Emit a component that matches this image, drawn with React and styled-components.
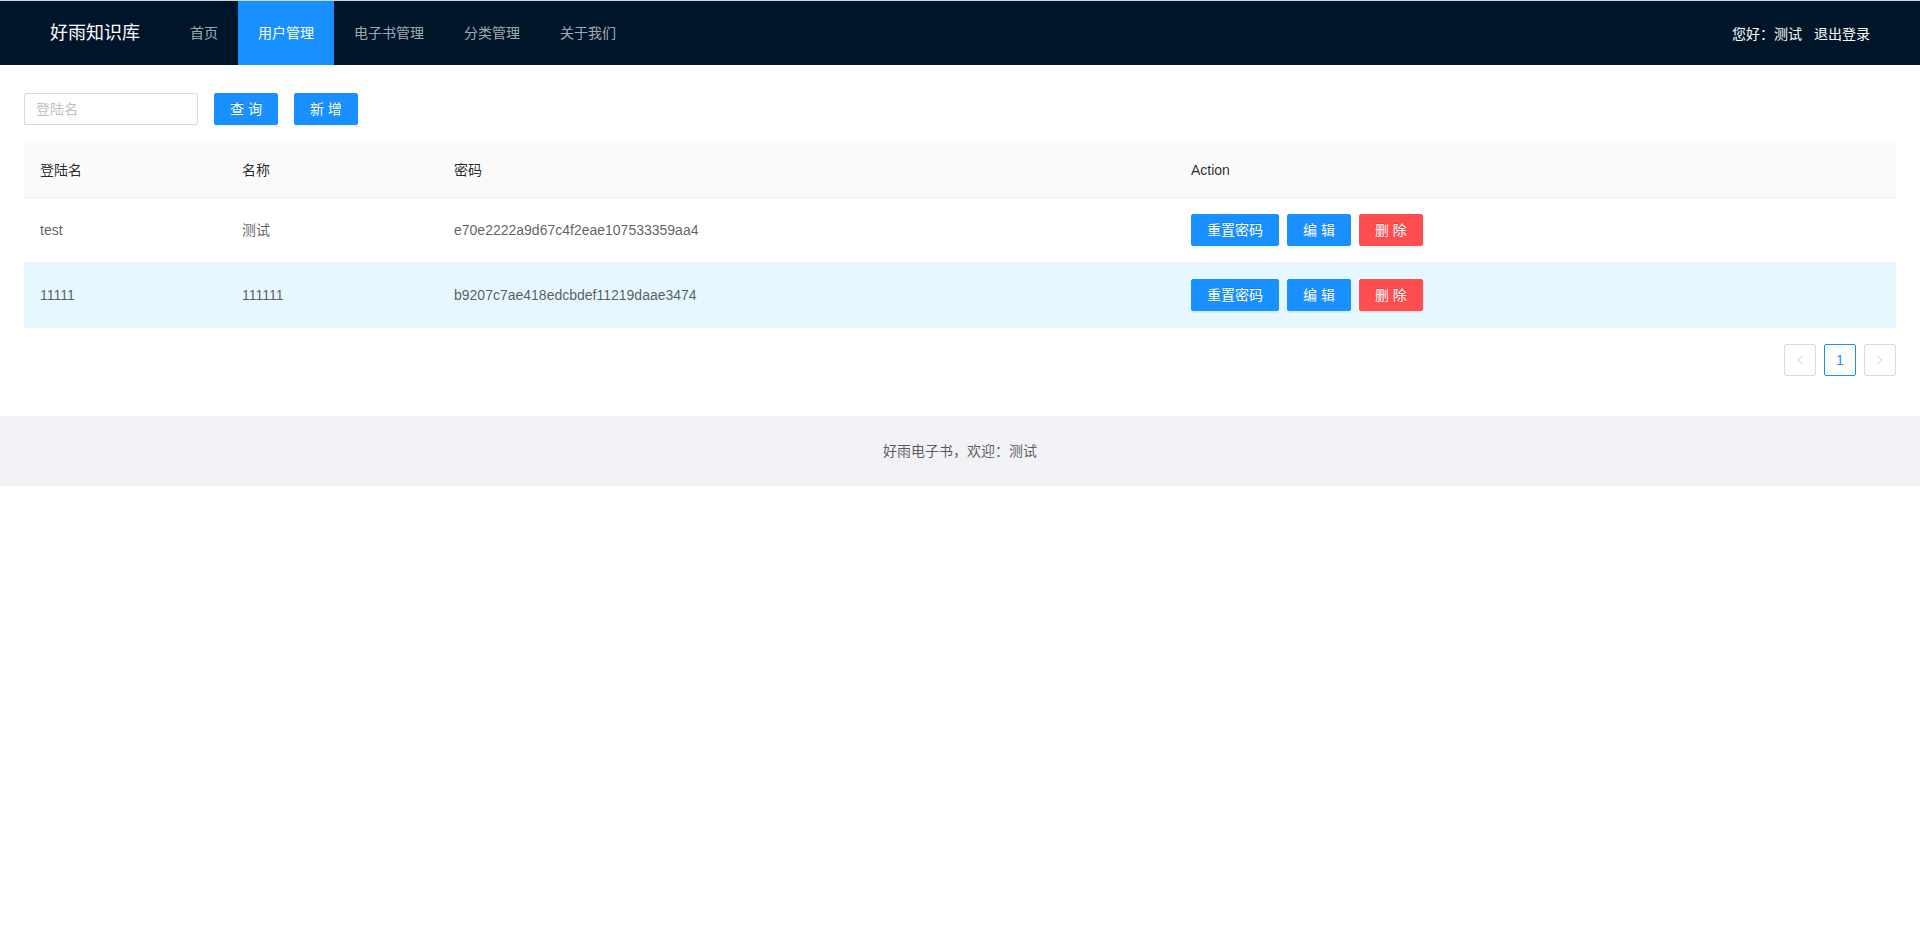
import styled, { createGlobalStyle } from 'styled-components';
import { ChevronLeft, ChevronRight } from 'lucide-react';

const users = [
  { login: 'test', name: '测试', password: 'e70e2222a9d67c4f2eae107533359aa4' },
  { login: '11111', name: '111111', password: 'b9207c7ae418edcbdef11219daae3474', hover: true },
];

const menus = ['首页', '用户管理', '电子书管理', '分类管理', '关于我们'];

const App = () => {
  return (
    <Page>
      <GlobalStyle />
      <Header>
        <Logo>好雨知识库</Logo>
        <Menu>
          {menus.map((m) => (
            <MenuItem key={m} $active={m === '用户管理'}>
              {m}
            </MenuItem>
          ))}
        </Menu>
        <UserBox>
          <span>您好：测试</span>
          <span>退出登录</span>
        </UserBox>
      </Header>

      <Content>
        <Toolbar>
          <SearchInput placeholder="登陆名" />
          <Button>查 询</Button>
          <Button>新 增</Button>
        </Toolbar>

        <Table>
          <colgroup>
            <col style={{ width: 202 }} />
            <col style={{ width: 212 }} />
            <col style={{ width: 737 }} />
            <col />
          </colgroup>
          <thead>
            <tr>
              <Th>登陆名</Th>
              <Th>名称</Th>
              <Th>密码</Th>
              <Th>Action</Th>
            </tr>
          </thead>
          <tbody>
            {users.map((u) => (
              <Row key={u.login} $hover={u.hover}>
                <Td>{u.login}</Td>
                <Td>{u.name}</Td>
                <Td>{u.password}</Td>
                <Td>
                  <Actions>
                    <Button>重置密码</Button>
                    <Button>编 辑</Button>
                    <Button $danger>删 除</Button>
                  </Actions>
                </Td>
              </Row>
            ))}
          </tbody>
        </Table>

        <Pagination>
          <PageItem $disabled>
            <ChevronLeft size={14} strokeWidth={1.5} />
          </PageItem>
          <PageItem $active>1</PageItem>
          <PageItem $disabled>
            <ChevronRight size={14} strokeWidth={1.5} />
          </PageItem>
        </Pagination>
      </Content>

      <Footer>好雨电子书，欢迎：测试</Footer>
    </Page>
  );
};

const GlobalStyle = createGlobalStyle`
  body {
    margin: 0;
    background: #fff;
    font-family: "Liberation Sans", "Noto Sans CJK SC", sans-serif;
    font-size: 14px;
    color: rgba(0, 0, 0, 0.65);
  }
  * {
    box-sizing: border-box;
  }
`;

const Page = styled.div`
  border-top: 1px solid #d4d4d4;
`;

const Header = styled.header`
  display: flex;
  align-items: center;
  height: 64px;
  padding: 0 50px;
  background: #001529;
`;

const Logo = styled.div`
  width: 120px;
  color: #fff;
  font-size: 18px;
  line-height: 64px;
`;

const Menu = styled.nav`
  display: flex;
  height: 64px;
`;

const MenuItem = styled.div`
  padding: 0 20px;
  line-height: 64px;
  color: ${(p) => (p.$active ? '#fff' : 'rgba(255, 255, 255, 0.65)')};
  background: ${(p) => (p.$active ? '#1890ff' : 'transparent')};
  cursor: pointer;
`;

const UserBox = styled.div`
  margin-left: auto;
  display: flex;
  gap: 12px;
  color: #fff;
`;

const Content = styled.main`
  padding: 28px 24px 24px;
`;

const Toolbar = styled.div`
  display: flex;
  gap: 16px;
  margin-bottom: 18px;
`;

const SearchInput = styled.input`
  width: 174px;
  height: 32px;
  padding: 4px 11px;
  border: 1px solid #d9d9d9;
  border-radius: 2px;
  font-family: inherit;
  font-size: 14px;
  color: rgba(0, 0, 0, 0.65);
  outline: none;

  &::placeholder {
    color: #bfbfbf;
  }
`;

const Button = styled.button`
  height: 32px;
  padding: 0 15px;
  border: 1px solid ${(p) => (p.$danger ? '#ff4d4f' : '#1890ff')};
  border-radius: 2px;
  background: ${(p) => (p.$danger ? '#ff4d4f' : '#1890ff')};
  color: #fff;
  font-family: inherit;
  font-size: 14px;
  line-height: 30px;
  white-space: nowrap;
  text-shadow: 0 -1px 0 rgba(0, 0, 0, 0.12);
  box-shadow: 0 2px 0 rgba(0, 0, 0, 0.045);
  cursor: pointer;
`;

const Table = styled.table`
  width: 100%;
  border-collapse: collapse;
  table-layout: fixed;
`;

const Th = styled.th`
  padding: 16px;
  background: #fafafa;
  border-bottom: 1px solid #f0f0f0;
  color: rgba(0, 0, 0, 0.85);
  font-weight: 400;
  text-align: left;
  line-height: 22px;
`;

const Row = styled.tr`
  background: ${(p) => (p.$hover ? '#e6f7ff' : '#fff')};
`;

const Td = styled.td`
  padding: 16px;
  border-bottom: 1px solid #f0f0f0;
  line-height: 22px;
  white-space: nowrap;
`;

const Actions = styled.div`
  display: flex;
  gap: 8px;
`;

const Pagination = styled.div`
  display: flex;
  justify-content: flex-end;
  gap: 8px;
  margin: 16px 0;
`;

const PageItem = styled.div`
  display: flex;
  align-items: center;
  justify-content: center;
  width: 32px;
  height: 32px;
  border: 1px solid ${(p) => (p.$active ? '#1890ff' : '#d9d9d9')};
  border-radius: 2px;
  color: ${(p) => (p.$active ? '#1890ff' : p.$disabled ? 'rgba(0, 0, 0, 0.25)' : 'rgba(0, 0, 0, 0.65)')};
  font-size: 14px;
`;

const Footer = styled.footer`
  padding: 24px 50px;
  background: #f0f2f5;
  text-align: center;
  line-height: 22px;
`;

export default App;
